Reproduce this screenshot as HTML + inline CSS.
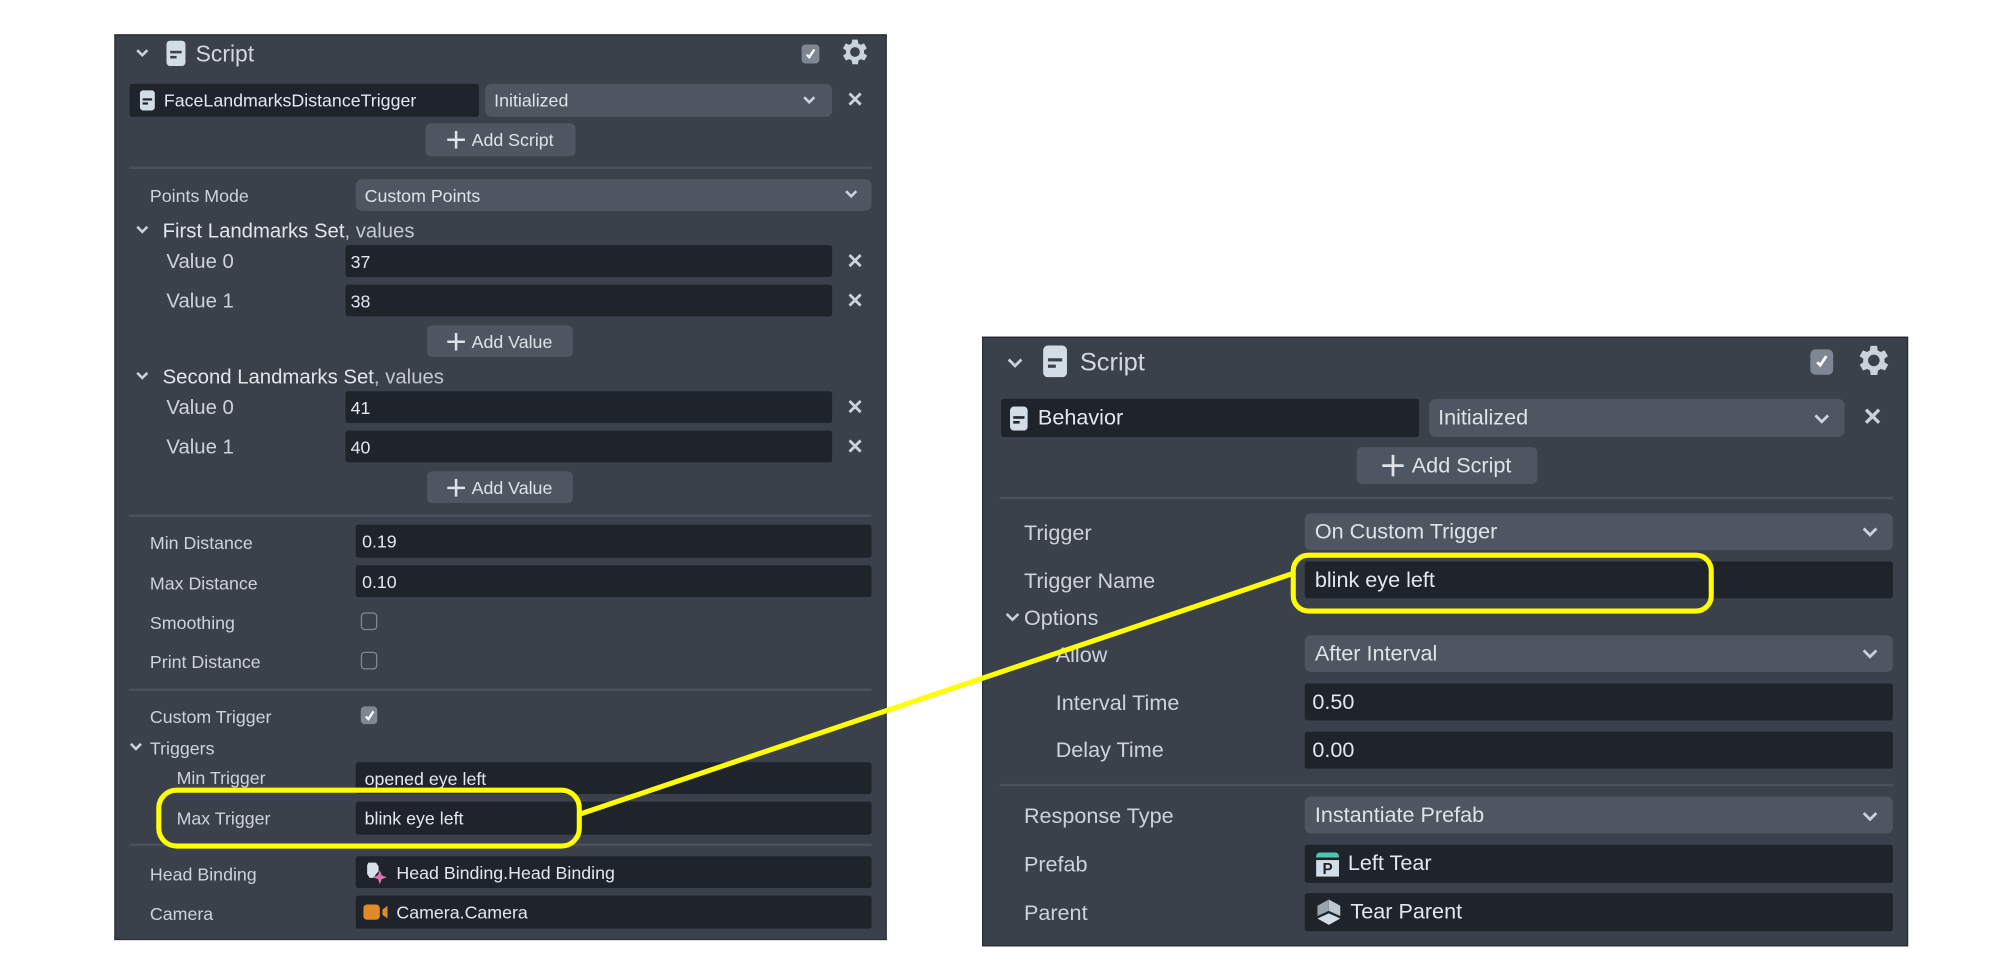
<!DOCTYPE html>
<html><head><meta charset="utf-8">
<style>
html,body{margin:0;padding:0;background:#fff;width:1992px;height:974px;overflow:hidden}
#s{position:absolute;left:0;top:0;width:1568px;height:767px;transform:scale(1.2704);transform-origin:0 0;font-family:"Liberation Sans",sans-serif;}
.a{position:absolute}
.p{position:absolute;background:#3b414a;border-top:1.5px solid #23262c;border-left:1px solid #2a2e34;border-bottom:1px solid #2a2e34;border-right:1px solid #2a2e34}
.in{position:absolute;background:#1f232a;border-radius:2px;color:#e4e8ee;box-sizing:border-box;display:flex;align-items:center}
.dd{position:absolute;background:#4e5661;border-radius:5px;color:#dfe3e8;box-sizing:border-box;display:flex;align-items:center}
.lb{position:absolute;color:#cfd3d9;white-space:nowrap;transform:translateY(-50%)}
.sep{position:absolute;height:1.5px;background:#4b515b}
.x{position:absolute;color:#c9d3de;font-weight:bold;transform:translate(-50%,-50%)}
.chev{position:absolute;transform:translate(-50%,-50%)}
.btn{position:absolute;background:#4e5661;border-radius:4px;color:#dfe3e8;display:flex;align-items:center;justify-content:center;box-sizing:border-box}
.cb{position:absolute;border-radius:3px;box-sizing:border-box}
</style></head><body><div id="s">

<!-- LEFT PANEL -->
<div class="p" style="left:90px;top:27px;width:606px;height:711px"></div>
<div style="font-size:14px">
<svg class="chev" style="left:112px;top:42px" width="10" height="7" viewBox="0 0 10 7"><path d="M1 1l4 4 4-4" stroke="#c9d3de" stroke-width="2" fill="none"/></svg>
<svg class="a" style="left:131px;top:32px" width="15" height="20" viewBox="0 0 15 20"><rect x="0" y="0" width="15" height="20" rx="3" fill="#d3dde8"/><rect x="3" y="8" width="9" height="2" fill="#3b414a"/><rect x="3" y="12" width="5" height="2" fill="#3b414a"/></svg>
<div class="lb" style="left:154px;top:43px;font-size:18px;color:#d4d8de">Script</div>
<div class="cb" style="left:631px;top:35px;width:14px;height:15px;background:#7e8895"></div>
<svg class="a" style="left:633px;top:38px" width="10" height="9" viewBox="0 0 10 9"><path d="M2 5l2 2 4-6" stroke="#fff" stroke-width="1.8" fill="none"/></svg>
<svg class="a" style="left:662px;top:31px" width="22" height="22" viewBox="3 3 20 20"><path fill="#c9d3de" d="M19.4 13a7.5 7.5 0 000-2l2.1-1.6-2-3.5-2.5 1a7.3 7.3 0 00-1.7-1L15 3.2h-4l-.4 2.7a7.3 7.3 0 00-1.7 1l-2.5-1-2 3.5L6.6 11a7.5 7.5 0 000 2l-2.1 1.6 2 3.5 2.5-1a7.3 7.3 0 001.7 1l.4 2.7h4l.4-2.7a7.3 7.3 0 001.7-1l2.5 1 2-3.5zM13 15.5a3.5 3.5 0 110-7 3.5 3.5 0 010 7z"/></svg>

<div class="in" style="left:102px;top:66px;width:275px;height:26px"><svg style="margin-left:8px" width="12" height="16" viewBox="0 0 11 15"><rect width="11" height="15" rx="2.5" fill="#d3dde8"/><rect x="2" y="6" width="7" height="1.6" fill="#1f232a"/><rect x="2" y="9" width="4" height="1.6" fill="#1f232a"/></svg><span style="margin-left:7px">FaceLandmarksDistanceTrigger</span></div>
<div class="dd" style="left:382px;top:66px;width:273px;height:26px"><span style="margin-left:7px">Initialized</span></div>
<svg class="chev" style="left:637px;top:79px" width="10" height="7" viewBox="0 0 10 7"><path d="M1 1l4 4 4-4" stroke="#c9d3de" stroke-width="2" fill="none"/></svg>
<div class="x" style="left:673px;top:79px;font-size:16px">✕</div>
<div class="btn" style="left:335px;top:97px;width:118px;height:26px"><svg width="14" height="14" style="margin-right:5px"><path d="M7 0v14M0 7h14" stroke="#dfe3e8" stroke-width="2"/></svg>Add Script</div>
<div class="sep" style="left:102px;top:131px;width:584px"></div>

<div class="lb" style="left:118px;top:154px">Points Mode</div>
<div class="dd" style="left:280px;top:141px;width:406px;height:25px"><span style="margin-left:7px">Custom Points</span></div>
<svg class="chev" style="left:670px;top:153px" width="10" height="7" viewBox="0 0 10 7"><path d="M1 1l4 4 4-4" stroke="#c9d3de" stroke-width="2" fill="none"/></svg>

<svg class="chev" style="left:112px;top:181px" width="10" height="7" viewBox="0 0 10 7"><path d="M1 1l4 4 4-4" stroke="#c9d3de" stroke-width="2" fill="none"/></svg>
<div class="lb" style="left:128px;top:183px;font-size:16px;color:#e2e6eb">First Landmarks Set<span style="color:#c4c9d0">, values</span></div>
<div class="lb" style="left:131px;top:207px;font-size:16px">Value 0</div>
<div class="in" style="left:272px;top:193px;width:383px;height:25px"><span style="margin-left:4px">37</span></div>
<div class="x" style="left:673px;top:206px;font-size:16px">✕</div>
<div class="lb" style="left:131px;top:238px;font-size:16px">Value 1</div>
<div class="in" style="left:272px;top:224px;width:383px;height:25px"><span style="margin-left:4px">38</span></div>
<div class="x" style="left:673px;top:237px;font-size:16px">✕</div>
<div class="btn" style="left:336px;top:256px;width:115px;height:25px"><svg width="14" height="14" style="margin-right:5px"><path d="M7 0v14M0 7h14" stroke="#dfe3e8" stroke-width="2"/></svg>Add Value</div>

<svg class="chev" style="left:112px;top:296px" width="10" height="7" viewBox="0 0 10 7"><path d="M1 1l4 4 4-4" stroke="#c9d3de" stroke-width="2" fill="none"/></svg>
<div class="lb" style="left:128px;top:298px;font-size:16px;color:#e2e6eb">Second Landmarks Set<span style="color:#c4c9d0">, values</span></div>
<div class="lb" style="left:131px;top:322px;font-size:16px">Value 0</div>
<div class="in" style="left:272px;top:308px;width:383px;height:25px"><span style="margin-left:4px">41</span></div>
<div class="x" style="left:673px;top:321px;font-size:16px">✕</div>
<div class="lb" style="left:131px;top:353px;font-size:16px">Value 1</div>
<div class="in" style="left:272px;top:339px;width:383px;height:25px"><span style="margin-left:4px">40</span></div>
<div class="x" style="left:673px;top:352px;font-size:16px">✕</div>
<div class="btn" style="left:336px;top:371px;width:115px;height:25px"><svg width="14" height="14" style="margin-right:5px"><path d="M7 0v14M0 7h14" stroke="#dfe3e8" stroke-width="2"/></svg>Add Value</div>
<div class="sep" style="left:102px;top:405px;width:584px"></div>

<div class="lb" style="left:118px;top:427px">Min Distance</div>
<div class="in" style="left:280px;top:413px;width:406px;height:26px"><span style="margin-left:5px">0.19</span></div>
<div class="lb" style="left:118px;top:459px">Max Distance</div>
<div class="in" style="left:280px;top:445px;width:406px;height:25px"><span style="margin-left:5px">0.10</span></div>
<div class="lb" style="left:118px;top:490px">Smoothing</div>
<div class="cb" style="left:284px;top:482px;width:13px;height:14px;border:1.5px solid #7e8895"></div>
<div class="lb" style="left:118px;top:521px">Print Distance</div>
<div class="cb" style="left:284px;top:513px;width:13px;height:14px;border:1.5px solid #7e8895"></div>
<div class="sep" style="left:102px;top:542px;width:584px"></div>

<div class="lb" style="left:118px;top:564px">Custom Trigger</div>
<div class="cb" style="left:284px;top:556px;width:13px;height:14px;background:#7e8895"></div>
<svg class="a" style="left:286px;top:559px" width="10" height="9" viewBox="0 0 10 9"><path d="M2 5l2 2 4-6" stroke="#fff" stroke-width="1.8" fill="none"/></svg>
<svg class="chev" style="left:107px;top:588px" width="10" height="7" viewBox="0 0 10 7"><path d="M1 1l4 4 4-4" stroke="#c9d3de" stroke-width="2" fill="none"/></svg>
<div class="lb" style="left:118px;top:589px">Triggers</div>
<div class="lb" style="left:139px;top:612px">Min Trigger</div>
<div class="in" style="left:280px;top:600px;width:406px;height:25px"><span style="margin-left:7px">opened eye left</span></div>
<div class="lb" style="left:139px;top:644px">Max Trigger</div>
<div class="in" style="left:280px;top:631px;width:406px;height:26px"><span style="margin-left:7px">blink eye left</span></div>
<div class="sep" style="left:102px;top:664px;width:584px"></div>

<div class="lb" style="left:118px;top:688px">Head Binding</div>
<div class="in" style="left:280px;top:674px;width:406px;height:25px"><svg style="margin-left:6px" width="20" height="20" viewBox="0 0 20 20"><path d="M4 2h6l2 3v4l-2 2-2 3H5L3 11V4z" fill="#d8e0ea"/><path d="M13 8l1.5 4 4 1.5-4 1.5L13 19l-1.5-4-4-1.5 4-1.5z" fill="#e070b0"/></svg><span style="margin-left:6px">Head Binding.Head Binding</span></div>
<div class="lb" style="left:118px;top:719px">Camera</div>
<div class="in" style="left:280px;top:705px;width:406px;height:26px"><svg style="margin-left:6px" width="20" height="14" viewBox="0 0 20 14"><rect x="0" y="1" width="13" height="12" rx="3" fill="#e08a2a"/><path d="M15 5l4-3v10l-4-3z" fill="#e08a2a"/></svg><span style="margin-left:6px">Camera.Camera</span></div>
</div>

<!-- RIGHT PANEL -->
<div class="p" style="left:773px;top:265px;width:727px;height:478px"></div>
<div style="font-size:17px">
<svg class="chev" style="left:799px;top:286px" width="12" height="8" viewBox="0 0 12 8"><path d="M1 1l5 5 5-5" stroke="#c9d3de" stroke-width="2.2" fill="none"/></svg>
<svg class="a" style="left:821px;top:272px" width="19" height="25" viewBox="0 0 15 20"><rect x="0" y="0" width="15" height="20" rx="3" fill="#d3dde8"/><rect x="3" y="8" width="9" height="2" fill="#3b414a"/><rect x="3" y="12" width="5" height="2" fill="#3b414a"/></svg>
<div class="lb" style="left:850px;top:286px;font-size:20px;color:#d4d8de">Script</div>
<div class="cb" style="left:1425px;top:275px;width:18px;height:20px;background:#7e8895;border-radius:4px"></div>
<svg class="a" style="left:1428px;top:279px" width="12" height="11" viewBox="0 0 10 9"><path d="M2 5l2 2 4-6" stroke="#fff" stroke-width="1.8" fill="none"/></svg>
<svg class="a" style="left:1462px;top:272px" width="26" height="26" viewBox="3 3 20 20"><path fill="#c9d3de" d="M19.4 13a7.5 7.5 0 000-2l2.1-1.6-2-3.5-2.5 1a7.3 7.3 0 00-1.7-1L15 3.2h-4l-.4 2.7a7.3 7.3 0 00-1.7 1l-2.5-1-2 3.5L6.6 11a7.5 7.5 0 000 2l-2.1 1.6 2 3.5 2.5-1a7.3 7.3 0 001.7 1l.4 2.7h4l.4-2.7a7.3 7.3 0 001.7-1l2.5 1 2-3.5zM13 15.5a3.5 3.5 0 110-7 3.5 3.5 0 010 7z"/></svg>

<div class="in" style="left:788px;top:314px;width:329px;height:30px"><svg style="margin-left:7px" width="14" height="19" viewBox="0 0 11 15"><rect width="11" height="15" rx="2.5" fill="#d3dde8"/><rect x="2" y="6" width="7" height="1.6" fill="#1f232a"/><rect x="2" y="9" width="4" height="1.6" fill="#1f232a"/></svg><span style="margin-left:8px">Behavior</span></div>
<div class="dd" style="left:1125px;top:314px;width:327px;height:30px"><span style="margin-left:7px">Initialized</span></div>
<svg class="chev" style="left:1434px;top:330px" width="12" height="8" viewBox="0 0 12 8"><path d="M1 1l5 5 5-5" stroke="#c9d3de" stroke-width="2.2" fill="none"/></svg>
<div class="x" style="left:1474px;top:329px;font-size:19px">✕</div>
<div class="btn" style="left:1068px;top:352px;width:142px;height:29px"><svg width="17" height="17" style="margin-right:6px"><path d="M8.5 0v17M0 8.5h17" stroke="#dfe3e8" stroke-width="2.2"/></svg>Add Script</div>
<div class="sep" style="left:787px;top:391px;width:703px"></div>

<div class="lb" style="left:806px;top:420px">Trigger</div>
<div class="dd" style="left:1027px;top:404px;width:463px;height:29px"><span style="margin-left:8px">On Custom Trigger</span></div>
<svg class="chev" style="left:1472px;top:419px" width="12" height="8" viewBox="0 0 12 8"><path d="M1 1l5 5 5-5" stroke="#c9d3de" stroke-width="2.2" fill="none"/></svg>
<div class="lb" style="left:806px;top:458px">Trigger Name</div>
<div class="in" style="left:1027px;top:442px;width:463px;height:29px"><span style="margin-left:8px">blink eye left</span></div>
<svg class="chev" style="left:797px;top:486px" width="11" height="8" viewBox="0 0 12 8"><path d="M1 1l5 5 5-5" stroke="#c9d3de" stroke-width="2.2" fill="none"/></svg>
<div class="lb" style="left:806px;top:487px">Options</div>
<div class="lb" style="left:831px;top:516px">Allow</div>
<div class="dd" style="left:1027px;top:500px;width:463px;height:29px"><span style="margin-left:8px">After Interval</span></div>
<svg class="chev" style="left:1472px;top:515px" width="12" height="8" viewBox="0 0 12 8"><path d="M1 1l5 5 5-5" stroke="#c9d3de" stroke-width="2.2" fill="none"/></svg>
<div class="lb" style="left:831px;top:554px">Interval Time</div>
<div class="in" style="left:1027px;top:538px;width:463px;height:29px"><span style="margin-left:6px">0.50</span></div>
<div class="lb" style="left:831px;top:591px">Delay Time</div>
<div class="in" style="left:1027px;top:576px;width:463px;height:29px"><span style="margin-left:6px">0.00</span></div>
<div class="sep" style="left:787px;top:617px;width:703px"></div>

<div class="lb" style="left:806px;top:643px">Response Type</div>
<div class="dd" style="left:1027px;top:627px;width:463px;height:29px"><span style="margin-left:8px">Instantiate Prefab</span></div>
<svg class="chev" style="left:1472px;top:643px" width="12" height="8" viewBox="0 0 12 8"><path d="M1 1l5 5 5-5" stroke="#c9d3de" stroke-width="2.2" fill="none"/></svg>
<div class="lb" style="left:806px;top:681px">Prefab</div>
<div class="in" style="left:1027px;top:665px;width:463px;height:30px"><svg style="margin-left:8px" width="20" height="22" viewBox="0 0 20 22"><path d="M1 5a3 3 0 013-3h12a3 3 0 013 3v1H1z" fill="#4dc8b0"/><rect x="1" y="8" width="18" height="13" fill="#d3dde8"/><text x="6" y="19" font-size="12" font-weight="bold" fill="#1f232a" font-family="Liberation Sans">P</text></svg><span style="margin-left:6px">Left Tear</span></div>
<div class="lb" style="left:806px;top:719px">Parent</div>
<div class="in" style="left:1027px;top:703px;width:463px;height:30px"><svg style="margin-left:8px" width="22" height="22" viewBox="0 0 22 22"><path d="M11 1l9 5v8l-9-4z" fill="#bfc6cf"/><path d="M11 1L2 6v8l9-4z" fill="#9aa2ac"/><path d="M2 16l9-4 9 4-9 5z" fill="#d3dde8"/></svg><span style="margin-left:6px">Tear Parent</span></div>
</div>

<!-- YELLOW CALLOUT -->
<svg class="a" style="left:0;top:0" width="1568" height="767" viewBox="0 0 1568 767">
<line x1="456" y1="641" x2="1019" y2="451" stroke="#ffff00" stroke-width="4"/>
<rect x="125" y="622" width="331" height="44" rx="14" fill="none" stroke="#ffff00" stroke-width="4"/>
<rect x="1018" y="437" width="329" height="44" rx="12" fill="none" stroke="#ffff00" stroke-width="4"/>
</svg>

</div></body></html>
